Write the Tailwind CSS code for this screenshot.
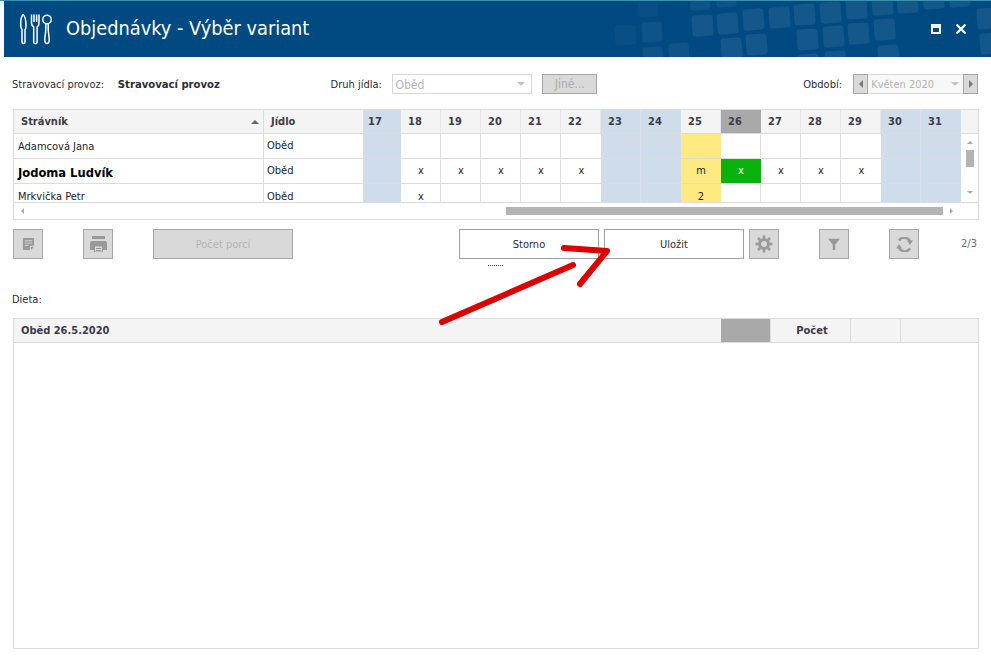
<!DOCTYPE html>
<html lang="cs">
<head>
  <meta charset="UTF-8" />
  <title>Objednávky - Výběr variant</title>
  <script src="https://cdn.jsdelivr.net/npm/@tailwindcss/browser@4"></script>
</head>
<body class="bg-white">
<div class="relative w-[991px] h-[658px] overflow-hidden bg-white font-['DejaVu_Sans_Condensed','DejaVu_Sans',sans-serif] text-[11px] text-[#2b2b3a]">

  <!-- title bar -->
  <div class="h-px bg-[#3a93ad]"></div>
  <header class="relative ml-[4px] h-[56px] bg-[#004a82] flex items-center text-white overflow-hidden">
    <svg class="absolute left-[-4px] top-0" width="991" height="56" viewBox="0 1 991 56" fill="#fff">
      <g fill-opacity=".03">
        <rect x="615" y="25" width="21" height="20" rx="3" transform="rotate(-4 625 35)"/>
        <rect x="638" y="-3" width="20" height="20" rx="3" transform="rotate(-4 648 7)"/>
      </g>
      <g fill-opacity=".06">
        <rect x="642" y="22" width="20" height="20" rx="3" transform="rotate(-4 652 32)"/>
        <rect x="643" y="47" width="20" height="20" rx="3" transform="rotate(-4 653 57)"/>
        <rect x="669" y="43" width="20" height="20" rx="3" transform="rotate(-4 679 53)"/>
        <rect x="690" y="-10" width="20" height="20" rx="3" transform="rotate(-4 700 0)"/>
        <rect x="716" y="-13" width="20" height="20" rx="3" transform="rotate(-4 726 -3)"/>
      </g>
      <g fill-opacity=".08">
        <rect x="692" y="15" width="21" height="21" rx="3" transform="rotate(-4 702 25)"/>
        <rect x="717" y="13" width="21" height="21" rx="3" transform="rotate(-4 727 23)"/>
        <rect x="743" y="9" width="21" height="21" rx="3" transform="rotate(-4 753 19)"/>
        <rect x="769" y="7" width="21" height="21" rx="3" transform="rotate(-4 779 17)"/>
        <rect x="794" y="4" width="21" height="21" rx="3" transform="rotate(-4 804 14)"/>
        <rect x="820" y="2" width="21" height="21" rx="3" transform="rotate(-4 830 12)"/>
        <rect x="846" y="-2" width="21" height="21" rx="3" transform="rotate(-4 856 8)"/>
        <rect x="872" y="-6" width="21" height="21" rx="3" transform="rotate(-4 882 4)"/>
        <rect x="897" y="-8" width="21" height="21" rx="3" transform="rotate(-4 907 2)"/>
        <rect x="923" y="-12" width="21" height="21" rx="3" transform="rotate(-4 933 -2)"/>
        <rect x="949" y="-14" width="21" height="21" rx="3" transform="rotate(-4 959 -4)"/>
        <rect x="797" y="29" width="21" height="21" rx="3" transform="rotate(-4 807 39)"/>
        <rect x="823" y="26" width="21" height="21" rx="3" transform="rotate(-4 833 36)"/>
        <rect x="848" y="23" width="21" height="21" rx="3" transform="rotate(-4 858 33)"/>
        <rect x="874" y="19" width="21" height="21" rx="3" transform="rotate(-4 884 29)"/>
        <rect x="977" y="8" width="21" height="21" rx="3" transform="rotate(-4 987 18)"/>
        <rect x="980" y="33" width="21" height="21" rx="3" transform="rotate(-4 990 43)"/>
        <rect x="721" y="38" width="21" height="21" rx="3" transform="rotate(-4 731 48)"/>
        <rect x="746" y="34" width="21" height="21" rx="3" transform="rotate(-4 756 44)"/>
        <rect x="878" y="45" width="21" height="21" rx="3" transform="rotate(-4 888 55)"/>
        <rect x="825" y="51" width="21" height="21" rx="3" transform="rotate(-4 835 61)"/>
        <rect x="798" y="54" width="21" height="21" rx="3" transform="rotate(-4 808 64)"/>
      </g>
    </svg>
    <svg class="relative ml-[15px] shrink-0" width="34" height="32" viewBox="0 0 34 32" fill="none" stroke="#fff" stroke-width="1.5" stroke-linejoin="round">
      <path d="M4 1.5C6 3 7 7 7 13C7 15 6.6 16 6 16.5V29a1.5 1.5 0 0 1-3 0V16.5C2 15.5 1.7 14 1.7 11C1.7 6 2.6 3 4 1.5Z"/>
      <path d="M12.5 1.5V10C12.5 12.5 14 13.5 14.7 14V29a1.7 1.7 0 0 0 3.4 0V14C19 13.5 20 12.5 20 10V1.5M15 1.5V9M17.6 1.5V9"/>
      <circle cx="28" cy="6.500" r="4.300"/>
      <path d="M26.800 11V16C26.800 20 25.800 23 25.800 26.500C25.800 29 26.600 30.500 28 30.500C29.400 30.500 30.200 29 30.200 26.500C30.200 23 29.200 20 29.200 16V11"/>
    </svg>
    <h1 class="relative ml-[13px] text-[19.8px] font-normal leading-none whitespace-nowrap">Objednávky - Výběr variant</h1>
    <div class="relative ml-auto mr-[25px] flex items-center gap-[15px]">
      <span class="w-[10px] h-[10px] bg-white flex items-center justify-center"><span class="w-[6px] h-[4px] mt-[1px] bg-[#004a82]"></span></span>
      <svg width="10" height="10" viewBox="0 0 10 10" stroke="#fff" stroke-width="2.200"><path d="M.5.5l9 9M9.500.5l-9 9"/></svg>
    </div>
  </header>

  <main class="px-[13px]">
    <!-- filter row -->
    <div class="h-[20px] mt-[17px] flex items-center">
      <span class="w-[106px] ml-[-1px] pt-[2px]">Stravovací provoz:</span>
      <span class="font-bold text-[11.2px] whitespace-nowrap w-[213px] pt-[2px]">Stravovací provoz</span>
      <span class="w-[62px] pt-[2px]">Druh jídla:</span>
      <div class="w-[140px] h-[20px] border border-[#d9d9d9] text-[#b4b4b4] flex items-center justify-between pl-[2px] pr-[6px]">
        <span class="text-[12px] pt-[1px]">Oběd</span>
        <span class="w-0 h-0 border-x-[4px] border-x-transparent border-t-[4px] border-t-[#c4c4c4]"></span>
      </div>
      <div class="ml-[10px] w-[55px] h-[20px] bg-[#d9d9d9] border border-[#a6a6a6] text-[#adadad] text-[12px] flex items-center justify-center">Jiné...</div>
      <span class="ml-[206px] w-[50px] pt-[2px]">Období:</span>
      <div class="w-[15px] h-[20px] bg-[#d9d9d9] border border-[#a6a6a6] flex items-center justify-center"><span class="w-0 h-0 border-y-[4px] border-y-transparent border-r-[4px] border-r-[#777]"></span></div>
      <div class="w-[95px] h-[20px] border-y border-[#d9d9d9] bg-[#f7f7f7] text-[#b4b4b4] flex items-center justify-between pl-[3px] pr-[4px]">
        <span class="text-[11px] pt-[2px]">Květen 2020</span>
        <span class="w-0 h-0 border-x-[4px] border-x-transparent border-t-[4px] border-t-[#c4c4c4]"></span>
      </div>
      <div class="w-[15px] h-[20px] bg-[#d9d9d9] border border-[#a6a6a6] flex items-center justify-center"><span class="w-0 h-0 border-y-[4px] border-y-transparent border-l-[4px] border-l-[#777]"></span></div>
    </div>

    <!-- calendar grid -->
    <section class="mt-[15px] w-[966px] h-[111px] border border-[#dcdcdc]">
      <div class="h-[24px] flex border-b border-[#dcdcdc] bg-[#f4f4f4] font-bold text-[11px] text-[#3b3b4a]">
        <div class="w-[250px] border-r border-[#dcdcdc] pl-[7px] pr-[4px] pt-[1px] flex items-center justify-between">Strávník <span class="w-0 h-0 border-x-[4px] border-x-transparent border-b-[4px] border-b-[#666]"></span></div>
        <div class="w-[100px] border-r border-[#dcdcdc] pl-[7px] pt-[1px] flex items-center">Jídlo</div>
        <div class="w-[37px] bg-[#cfdce9] pl-[4px] pt-[1px] flex items-center">17</div>
        <div class="w-[40px] border-r border-[#e6e6e6] pl-[7px] pt-[1px] flex items-center">18</div>
        <div class="w-[40px] border-r border-[#e6e6e6] pl-[7px] pt-[1px] flex items-center">19</div>
        <div class="w-[40px] border-r border-[#e6e6e6] pl-[7px] pt-[1px] flex items-center">20</div>
        <div class="w-[40px] border-r border-[#e6e6e6] pl-[7px] pt-[1px] flex items-center">21</div>
        <div class="w-[40px] border-r border-[#e6e6e6] pl-[7px] pt-[1px] flex items-center">22</div>
        <div class="w-[40px] bg-[#cfdce9] border-r border-[#d9e2ec] pl-[7px] pt-[1px] flex items-center">23</div>
        <div class="w-[40px] bg-[#cfdce9] pl-[7px] pt-[1px] flex items-center">24</div>
        <div class="w-[40px] border-r border-[#e6e6e6] pl-[7px] pt-[1px] flex items-center">25</div>
        <div class="w-[40px] bg-[#a9a9a9] pl-[7px] pt-[1px] flex items-center">26</div>
        <div class="w-[40px] border-r border-[#e6e6e6] pl-[7px] pt-[1px] flex items-center">27</div>
        <div class="w-[40px] border-r border-[#e6e6e6] pl-[7px] pt-[1px] flex items-center">28</div>
        <div class="w-[40px] border-r border-[#e6e6e6] pl-[7px] pt-[1px] flex items-center">29</div>
        <div class="w-[40px] bg-[#cfdce9] border-r border-[#d9e2ec] pl-[7px] pt-[1px] flex items-center">30</div>
        <div class="w-[40px] bg-[#cfdce9] pl-[7px] pt-[1px] flex items-center">31</div>
      </div>
      <div class="h-[69px] flex border-b border-[#dcdcdc]">
        <div class="w-[947px] overflow-hidden text-[11px] text-[#1c1c2c]">
          <div class="h-[25px] flex border-b border-[#dcdcdc]">
            <div class="w-[250px] pl-[4px] pt-[2px] border-r border-[#dcdcdc] flex items-center">Adamcová Jana</div>
            <div class="w-[100px] pl-[3px] border-r border-[#dcdcdc] flex items-center">Oběd</div>
            <div class="w-[37px] bg-[#cfdce9]"></div>
            <div class="w-[40px] border-r border-[#e0e0e0]"></div>
            <div class="w-[40px] border-r border-[#e0e0e0]"></div>
            <div class="w-[40px] border-r border-[#e0e0e0]"></div>
            <div class="w-[40px] border-r border-[#e0e0e0]"></div>
            <div class="w-[40px]"></div>
            <div class="w-[40px] bg-[#cfdce9] border-r border-[#d9e2ec]"></div>
            <div class="w-[40px] bg-[#cfdce9]"></div>
            <div class="w-[40px] bg-[#ffe981]"></div>
            <div class="w-[40px] border-r border-[#e0e0e0]"></div>
            <div class="w-[40px] border-r border-[#e0e0e0]"></div>
            <div class="w-[40px] border-r border-[#e0e0e0]"></div>
            <div class="w-[40px]"></div>
            <div class="w-[40px] bg-[#cfdce9] border-r border-[#d9e2ec]"></div>
            <div class="w-[40px] bg-[#cfdce9]"></div>
          </div>
          <div class="h-[25px] flex border-b border-[#dcdcdc]">
            <div class="w-[250px] pl-[4px] border-r border-[#dcdcdc] flex items-center font-bold text-[12.8px] text-black pt-[3px]">Jodoma Ludvík</div>
            <div class="w-[100px] pl-[3px] border-r border-[#dcdcdc] flex items-center">Oběd</div>
            <div class="w-[37px] bg-[#cfdce9]"></div>
            <div class="w-[40px] border-r border-[#e0e0e0] pl-[1px] pt-[1px] flex items-center justify-center">x</div>
            <div class="w-[40px] border-r border-[#e0e0e0] pl-[1px] pt-[1px] flex items-center justify-center">x</div>
            <div class="w-[40px] border-r border-[#e0e0e0] pl-[1px] pt-[1px] flex items-center justify-center">x</div>
            <div class="w-[40px] border-r border-[#e0e0e0] pl-[1px] pt-[1px] flex items-center justify-center">x</div>
            <div class="w-[40px] pl-[1px] pt-[1px] flex items-center justify-center">x</div>
            <div class="w-[40px] bg-[#cfdce9] border-r border-[#d9e2ec]"></div>
            <div class="w-[40px] bg-[#cfdce9]"></div>
            <div class="w-[40px] bg-[#ffe981] pt-[1px] flex items-center justify-center">m</div>
            <div class="w-[40px] bg-[#09b30c] text-white pt-[1px] flex items-center justify-center">x</div>
            <div class="w-[40px] border-r border-[#e0e0e0] pl-[1px] pt-[1px] flex items-center justify-center">x</div>
            <div class="w-[40px] border-r border-[#e0e0e0] pl-[1px] pt-[1px] flex items-center justify-center">x</div>
            <div class="w-[40px] pl-[1px] pt-[1px] flex items-center justify-center">x</div>
            <div class="w-[40px] bg-[#cfdce9] border-r border-[#d9e2ec]"></div>
            <div class="w-[40px] bg-[#cfdce9]"></div>
          </div>
          <div class="h-[25px] flex">
            <div class="w-[250px] pl-[4px] pt-[1px] border-r border-[#dcdcdc] flex items-center">Mrkvička Petr</div>
            <div class="w-[100px] pl-[3px] pt-[1px] border-r border-[#dcdcdc] flex items-center">Oběd</div>
            <div class="w-[37px] bg-[#cfdce9]"></div>
            <div class="w-[40px] border-r border-[#e0e0e0] pl-[1px] pt-[1px] flex items-center justify-center">x</div>
            <div class="w-[40px] border-r border-[#e0e0e0]"></div>
            <div class="w-[40px] border-r border-[#e0e0e0]"></div>
            <div class="w-[40px] border-r border-[#e0e0e0]"></div>
            <div class="w-[40px]"></div>
            <div class="w-[40px] bg-[#cfdce9] border-r border-[#d9e2ec]"></div>
            <div class="w-[40px] bg-[#cfdce9]"></div>
            <div class="w-[40px] bg-[#ffe981] pt-[1px] flex items-center justify-center">2</div>
            <div class="w-[40px] border-r border-[#e0e0e0]"></div>
            <div class="w-[40px] border-r border-[#e0e0e0]"></div>
            <div class="w-[40px] border-r border-[#e0e0e0]"></div>
            <div class="w-[40px]"></div>
            <div class="w-[40px] bg-[#cfdce9] border-r border-[#d9e2ec]"></div>
            <div class="w-[40px] bg-[#cfdce9]"></div>
          </div>
        </div>
        <!-- vertical scrollbar -->
        <div class="w-[17px] flex flex-col items-center pt-[7px] pl-[1px]">
          <span class="w-0 h-0 border-x-[3px] border-x-transparent border-b-[3px] border-b-[#aaa]"></span>
          <span class="mt-[6px] w-[8px] h-[17px] bg-[#b4b4b4]"></span>
          <span class="mt-auto mb-[8px] w-0 h-0 border-x-[3px] border-x-transparent border-t-[3px] border-t-[#aaa]"></span>
        </div>
      </div>
      <!-- horizontal scrollbar -->
      <div class="h-[16px] flex items-center">
        <span class="ml-[7px] w-0 h-0 border-y-[3px] border-y-transparent border-r-[3px] border-r-[#aaa]"></span>
        <span class="ml-[482px] w-[437px] h-[8px] bg-[#b4b4b4]"></span>
        <span class="ml-[7px] w-0 h-0 border-y-[3px] border-y-transparent border-l-[3px] border-l-[#aaa]"></span>
      </div>
    </section>

    <!-- toolbar -->
    <div class="mt-[9px] h-[30px] flex items-center">
      <button class="w-[30px] h-[30px] bg-[#d9d9d9] border border-[#a6a6a6] flex items-center justify-center">
        <svg width="13" height="14" viewBox="0 0 14 15" fill="#999"><path d="M1 1h12v8.500H8.500V14H1z"/><path d="M9.500 10.500H13L9.500 14z"/><path d="M3 4h8M3 6.500h8M3 9h4" stroke="#d9d9d9"/></svg>
      </button>
      <button class="ml-[40px] w-[30px] h-[30px] bg-[#d9d9d9] border border-[#a6a6a6] flex items-center justify-center">
        <svg width="17" height="16" viewBox="0 0 17 16" fill="#999"><path d="M2 0h13v3H2z"/><path d="M2 5h13a2 2 0 0 1 2 2v7H0V7a2 2 0 0 1 2-2z"/><path d="M4.500 10h8v6h-8z" fill="#d9d9d9" stroke="#999"/><path d="M6 12.500h5M6 14.500h5" stroke="#999"/></svg>
      </button>
      <button class="ml-[40px] w-[140px] h-[30px] bg-[#d9d9d9] border border-[#a6a6a6] text-[#b4b4b4] text-[11px] pt-[2px]">Počet porcí</button>
      <button class="ml-[166px] w-[140px] h-[30px] bg-white border border-[#a0a0a0] text-[#2b2b3a] text-[11px] pt-[2px]">Storno</button>
      <button class="ml-[5px] w-[140px] h-[30px] bg-white border border-[#a0a0a0] text-[#2b2b3a] text-[11px] pt-[2px]">Uložit</button>
      <button class="ml-[5px] w-[30px] h-[30px] bg-[#d9d9d9] border border-[#a6a6a6] flex items-center justify-center">
        <svg width="18" height="18" viewBox="0 0 18 18" fill="none" stroke="#999"><circle cx="9" cy="9" r="4.500" stroke-width="3"/><path d="M9 .5v3M9 14.500v3M.5 9h3M14.500 9h3M3 3l2 2M13 13l2 2M15 3l-2 2M5 13l-2 2" stroke-width="2.600"/></svg>
      </button>
      <button class="ml-[40px] w-[30px] h-[30px] bg-[#d9d9d9] border border-[#a6a6a6] flex items-center justify-center">
        <svg width="12" height="12" viewBox="0 0 14 14" fill="#999"><path d="M0 1h14L8.500 7.500V14h-3V7.500z"/></svg>
      </button>
      <button class="ml-[40px] w-[30px] h-[30px] bg-[#d9d9d9] border border-[#a6a6a6] flex items-center justify-center">
        <svg width="17" height="15" viewBox="0 0 17 15" fill="none" stroke="#999" stroke-width="2.400"><path d="M14.500 5A6.500 6.500 0 0 0 3 3.500"/><path d="M2.500 10A6.500 6.500 0 0 0 14 11.500"/><path d="M17 3.500L14 8L11 3.500z" fill="#999" stroke="none"/><path d="M0 11.500L3 7L6 11.500z" fill="#999" stroke="none"/></svg>
      </button>
      <span class="ml-auto mr-[1px] text-[#6b6b6b] text-[11px]">2/3</span>
    </div>
    <div class="mt-[6px] ml-[475px] w-[15px] border-t border-dotted border-[#444]"></div>

    <!-- diet section -->
    <p class="mt-[27px] ml-[-1px] h-[14px] leading-[14px]">Dieta:</p>
    <section class="mt-[11px] w-[966px] h-[331px] border border-[#dcdcdc]">
      <div class="h-[24px] flex border-b border-[#dcdcdc] bg-[#f4f4f4] font-bold text-[11px] text-[#3b3b4a]">
        <div class="w-[707px] pl-[7px] pt-[1px] flex items-center">Oběd 26.5.2020</div>
        <div class="w-[50px] bg-[#a9a9a9] border-r border-[#dcdcdc]"></div>
        <div class="w-[80px] border-r border-[#dcdcdc] pl-[3px] pt-[1px] flex items-center justify-center">Počet</div>
        <div class="w-[50px] border-r border-[#dcdcdc]"></div>
        <div class="flex-1"></div>
      </div>
    </section>
  </main>

  <!-- red annotation arrow -->
  <svg class="absolute left-0 top-0 pointer-events-none" width="991" height="658" fill="none" stroke="#dc0000" stroke-width="6" stroke-linecap="round" stroke-linejoin="round">
    <path d="M442 322L573 265"/>
    <path d="M564 248L607 251L580 284"/>
  </svg>
</div>
</body>
</html>
